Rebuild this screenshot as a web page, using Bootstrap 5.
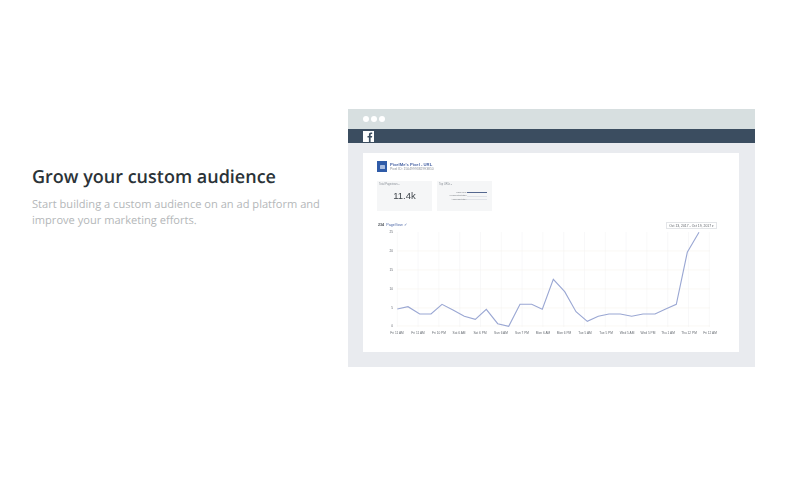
<!DOCTYPE html>
<html lang="en">
<head>
<meta charset="utf-8">
<title>Grow your custom audience</title>
<link href="https://cdn.jsdelivr.net/npm/bootstrap@5.3.0/dist/css/bootstrap.min.css" rel="stylesheet">
<style>
html,body{height:100%;background:#fff;overflow:hidden}
body{font-family:"Open Sans",sans-serif}
.stage{padding:109px 45px 0 32px;height:500px}
.copy-col{width:271px;margin-right:45px;flex:none;padding-top:53px}
.copy-title{font-size:18px;line-height:30px;font-weight:600;color:#2b3338;white-space:nowrap;margin:0 0 5px;text-rendering:geometricPrecision}
.copy-text{font-size:11.1px;line-height:16px;color:#b4b7b9;width:296px;margin:0;text-rendering:geometricPrecision;white-space:nowrap}
.mock{width:407px;height:258px;flex:none;background:#e9ebef;filter:blur(.5px)}
.mock-top{height:20px;background:#d7dfe0;padding-left:15px;gap:1.6px}
.dot{width:6.4px;height:6.4px;border-radius:50%;background:#fff}
.mock-nav{height:14px;background:#3b4d60;padding-left:15px}
.fb{width:11px;height:11px;background:#fff;display:block}
.mock-body{padding:10px 16px 15px 15px}
.panel{background:#fff;height:199px;padding:8px 14px 0 14px}
.pix-icon{width:10px;height:11px;background:#2f5ba8;margin-right:3px;padding:3.5px 2.5px}
.pix-icon i{display:block;height:100%;background:#a9bde0;border-radius:.5px}
.pix-name{font-size:4.2px;line-height:5px;font-weight:700;color:#4b66a6;font-family:"Liberation Sans",sans-serif}
.pix-sub{font-size:3.4px;line-height:4px;color:#8b9098;font-family:"Liberation Sans",sans-serif}
.tiles{margin-top:9px;gap:5px}
.tile{width:55px;height:30px;background:#f5f6f7;padding:2px 2px;font-family:"Liberation Sans",sans-serif}
.tile-label{font-size:2.6px;line-height:4px;color:#8b9098}
.tile-num{font-size:9.5px;line-height:12px;color:#3f454b;margin-top:3px;text-align:center}
.tile-row{gap:1px;font-size:2.2px;line-height:3.4px;color:#6d7279;justify-content:flex-end;padding-right:3px}
.tile-row span{width:28px;text-align:right}
.meter{width:20px;height:1px;background:#e0e3e8}
.meter.full{background:#55688f;height:1.4px}
.chart-head{margin-top:11px;height:7px;font-family:"Liberation Sans",sans-serif;font-size:3.7px;line-height:7px;color:#4b5158;padding-left:1px}
.chart-head b{font-weight:700;margin-right:1px}
.chart-head em{font-style:normal;color:#4b66a6}
.range{font-size:3.4px;line-height:6px;height:7px;padding:0 2px;border:.5px solid #e3e5e8;color:#5d6269;margin-right:8px}
.chart{display:block;width:376px;height:120px;margin:3px -14px 0;font-family:"Liberation Sans",sans-serif;overflow:visible}
.chart text{font-size:3.2px;fill:#666b72}
.chart .grid{stroke:#f3f4f5;stroke-width:.6}
.chart .grid-h{stroke:#f6f4ec;stroke-width:.6}
.chart .line{fill:none;stroke:#9aa7d3;stroke-width:1.1}
</style>
</head>
<body>
<main class="stage d-flex align-items-start">
  <section class="copy-col">
    <h1 class="copy-title">Grow your custom audience</h1>
    <p class="copy-text">Start building a custom audience on an ad platform and<br>improve your marketing efforts.</p>
  </section>
  <section class="mock">
    <div class="mock-top d-flex align-items-center">
      <span class="dot"></span><span class="dot"></span><span class="dot"></span>
    </div>
    <div class="mock-nav d-flex align-items-center">
      <svg class="fb" viewBox="0 0 10 11" aria-hidden="true"><rect width="10" height="11" fill="#fff"/><path d="M5.4 11V6.6H4V4.9h1.4V3.7C5.4 2.3 6.2 1.5 7.5 1.5h1.2v1.6h-.8c-.6 0-.8.3-.8.8v1h1.6l-.2 1.7H7.1V11z" fill="#3b4d60"/></svg>
    </div>
    <div class="mock-body">
      <div class="panel">
        <div class="d-flex align-items-center">
          <div class="pix-icon"><i></i></div>
          <div>
            <div class="pix-name">PixelMe's Pixel - URL</div>
            <div class="pix-sub">Pixel ID: 1504999382993810</div>
          </div>
        </div>
        <div class="tiles d-flex">
          <div class="tile">
            <div class="tile-label">Total Pageviews ▪</div>
            <div class="tile-num">11.4k</div>
          </div>
          <div class="tile">
            <div class="tile-label">Top URLs ▪</div>
            <div class="tile-row d-flex align-items-center mt-1"><span>PageView</span><i class="meter full"></i></div>
            <div class="tile-row d-flex align-items-center"><span>ViewContent.html</span><i class="meter"></i></div>
            <div class="tile-row d-flex align-items-center"><span>AddToCart.html</span><i class="meter"></i></div>
          </div>
        </div>
        <div class="chart-head d-flex justify-content-between">
          <div><b>234</b> <em>PageView ✓</em></div>
          <div class="range">Oct 13, 2017 - Oct 19, 2017 ▾</div>
        </div>
        <svg class="chart" viewBox="0 0 376 120" role="img" aria-label="PageView line chart">
          <g class="grid" id="vg"></g>
          <g class="grid-h">
            <line x1="34" x2="347" y1="19" y2="19"/><line x1="34" x2="347" y1="38" y2="38"/><line x1="34" x2="347" y1="57" y2="57"/><line x1="34" x2="347" y1="76" y2="76"/><line x1="34" x2="347" y1="94" y2="94"/>
          </g>
          <g text-anchor="end">
            <text x="30" y="1.1">25</text><text x="30" y="20">20</text><text x="30" y="39">15</text><text x="30" y="58">10</text><text x="30" y="77">5</text><text x="30" y="95">0</text>
          </g>
          <polyline class="line" points="34.3,77 45,74.7 56.7,82 68,82 79,72.3 90,78 101.3,84.3 112.3,87.3 123.3,77.3 134.7,91.7 145.7,94.3 157,72.3 168.7,72.3 179.3,77.3 190.3,47.3 201.7,59.7 213,79.7 224.3,89.3 235.3,84.3 246,82 257.3,82 268.7,84.3 280,82 292,82 302.7,77 313.3,72.3 324.3,20.3 336,0.3"/>
          <g text-anchor="middle">
            <text x="34" y="101.5">Fri 11 AM</text><text x="55" y="101.5">Fri 11 AM</text><text x="76" y="101.5">Fri 10 PM</text><text x="96" y="101.5">Sat 6 AM</text><text x="117" y="101.5">Sat 6 PM</text><text x="138" y="101.5">Sun 6 AM</text><text x="159" y="101.5">Sun 7 PM</text><text x="180" y="101.5">Mon 6 AM</text><text x="201" y="101.5">Mon 6 PM</text><text x="222" y="101.5">Tue 5 AM</text><text x="243" y="101.5">Tue 5 PM</text><text x="264" y="101.5">Wed 5 AM</text><text x="285" y="101.5">Wed 5 PM</text><text x="305" y="101.5">Thu 1 AM</text><text x="326" y="101.5">Thu 12 PM</text><text x="347" y="101.5">Fri 12 AM</text>
          </g>
        </svg>
      </div>
    </div>
  </section>
</main>
<script>
var g=document.getElementById('vg');
for(var i=0;i<16;i++){var l=document.createElementNS('http://www.w3.org/2000/svg','line');var x=34.3+i*20.8;l.setAttribute('x1',x);l.setAttribute('x2',x);l.setAttribute('y1',0);l.setAttribute('y2',95);g.appendChild(l);}
</script>
<script src="https://cdn.jsdelivr.net/npm/bootstrap@5.3.0/dist/js/bootstrap.bundle.min.js"></script>
</body>
</html>
